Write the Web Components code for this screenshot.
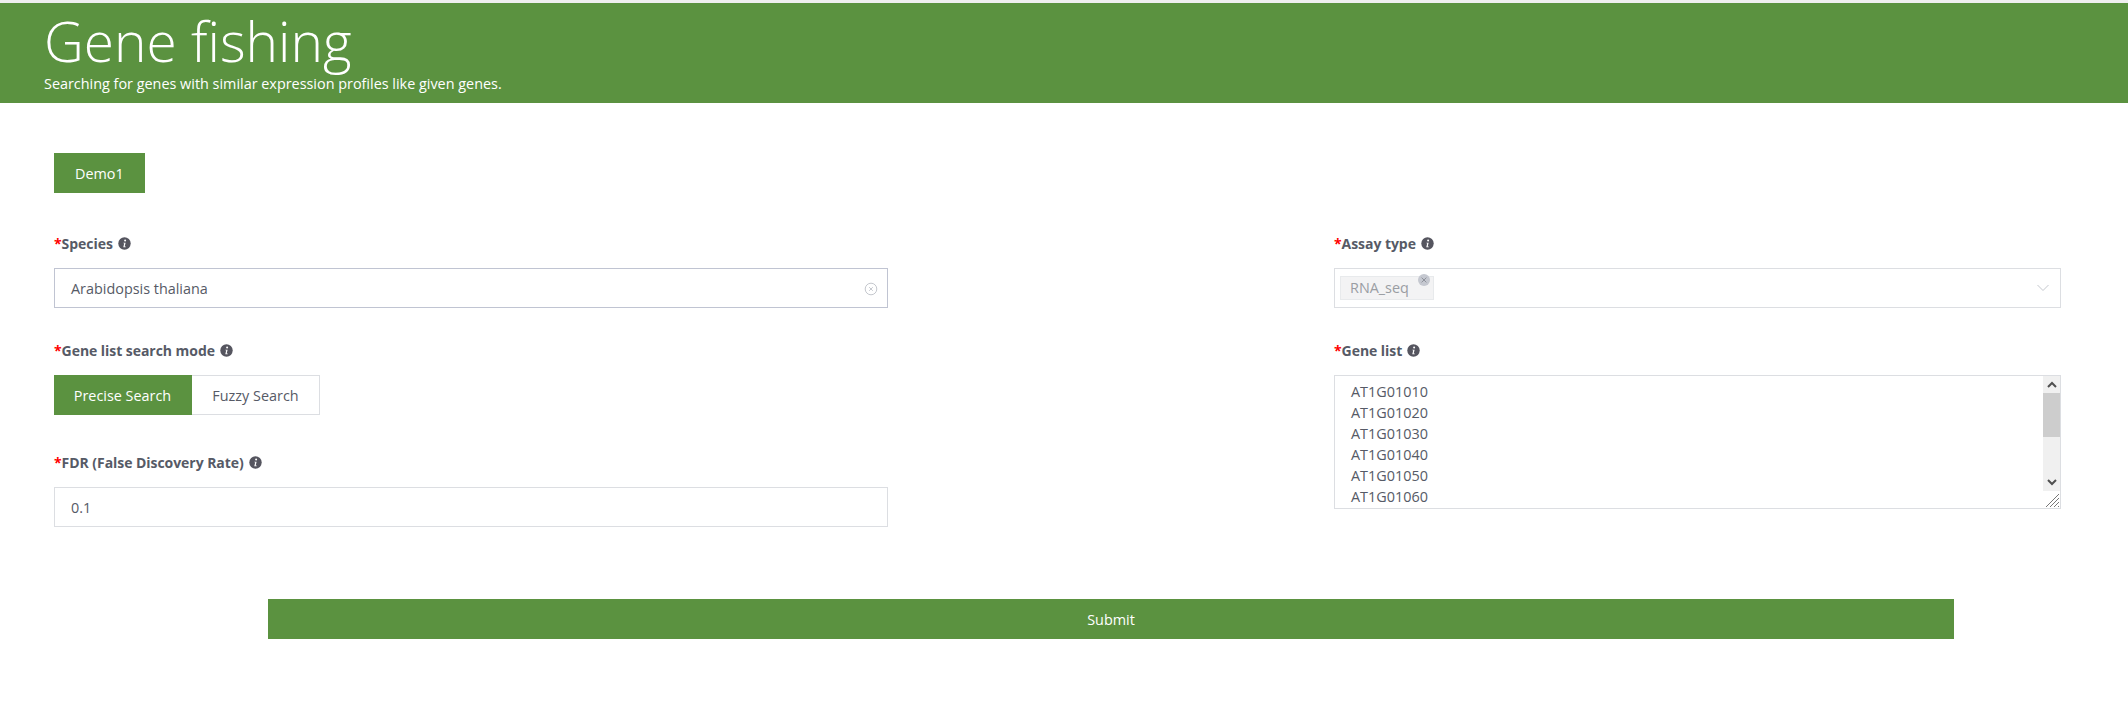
<!DOCTYPE html>
<html lang="en">
<head>
<meta charset="utf-8">
<title>Gene fishing</title>
<style>
  html, body { margin: 0; background: #fff; }
  body { font-family: "Open Sans", "Liberation Sans", sans-serif; font-size: 14.4px; color: #565a66; }
</style>
</head>
<body>
<gene-fishing-page></gene-fishing-page>

<script>
(function () {
  const GREEN = '#5b9240';
  const INFO_ICON = `
    <svg width="13" height="13" viewBox="0 0 13 13" aria-hidden="true">
      <circle cx="6.5" cy="6.5" r="6.2" fill="#55555f"/>
      <circle cx="7.1" cy="3.6" r="1" fill="#fff"/>
      <path d="M5.4 5.7h2.2L6.7 9.6h1v.6H5.3l.9-3.9h-.9z" fill="#fff"/>
    </svg>`;

  class PageBanner extends HTMLElement {
    constructor() {
      super();
      this.attachShadow({ mode: 'open' }).innerHTML = `
        <style>
          :host { display: block; border-top: 3px solid #efefef; background: ${GREEN}; color: #fff; }
          .inner { height: 100px; box-sizing: border-box; padding: 6px 0 0 44px; }
          h1 { margin: 0; font-size: 55px; line-height: 64px; font-weight: 300; }
          p { margin: 1px 0 0; font-size: 14.4px; line-height: 20px; }
        </style>
        <div class="inner">
          <h1>${this.getAttribute('heading')}</h1>
          <p>${this.getAttribute('subheading')}</p>
        </div>`;
    }
  }

  class PrimaryButton extends HTMLElement {
    constructor() {
      super();
      this.attachShadow({ mode: 'open' }).innerHTML = `
        <style>
          :host { display: flex; align-items: center; justify-content: center; height: 40px; background: ${GREEN}; color: #fff; cursor: pointer; }
          :host([compact]) { display: inline-flex; padding: 0 21px; }
        </style>
        <slot></slot>`;
    }
  }

  class FormField extends HTMLElement {
    constructor() {
      super();
      this.attachShadow({ mode: 'open' }).innerHTML = `
        <style>
          :host { display: block; margin-bottom: 31px; }
          .label { display: flex; align-items: center; gap: 5px; height: 22px; margin-bottom: 14px; font-size: 14px; font-weight: 700; letter-spacing: -0.05px; }
          .req { color: #f00; font-weight: 700; }
          svg { display: block; }
        </style>
        <div class="label"><span><span class="req">*</span>${this.getAttribute('label')}</span>${INFO_ICON}</div>
        <slot></slot>`;
    }
  }

  class TextBox extends HTMLElement {
    constructor() {
      super();
      const clearable = this.hasAttribute('clearable');
      this.attachShadow({ mode: 'open' }).innerHTML = `
        <style>
          :host { display: flex; align-items: center; justify-content: space-between; height: 40px; box-sizing: border-box; border: 1px solid #dcdee2; padding: 0 9px 0 16px; }
          :host([clearable]) { border-color: #c0c4d2; }
          svg { display: block; margin-top: 1px; }
        </style>
        <span>${this.getAttribute('value')}</span>
        ${clearable ? `<svg width="14" height="14" viewBox="0 0 14 14" fill="none" stroke="#c5c8ce">
          <circle cx="7" cy="7" r="5.8"/><path d="M5.2 5.2l3.6 3.6M8.8 5.2l-3.6 3.6"/></svg>` : ''}`;
    }
  }

  class TagSelect extends HTMLElement {
    constructor() {
      super();
      this.attachShadow({ mode: 'open' }).innerHTML = `
        <style>
          :host { display: flex; align-items: center; justify-content: space-between; height: 40px; box-sizing: border-box; border: 1px solid #dcdee2; padding: 0 10px 0 5px; }
          .tag { position: relative; box-sizing: border-box; width: 94px; height: 24px; padding-left: 9px; line-height: 22px; border: 1px solid #e8eaec; background: #f3f3f4; color: #9a9da3; }
          .close { position: absolute; top: -3px; right: 3px; }
          svg { display: block; }
        </style>
        <span class="tag">${this.getAttribute('tag')}
          <svg class="close" width="12" height="12" viewBox="0 0 12 12">
            <circle cx="6" cy="6" r="6" fill="#c5c8d0"/>
            <path d="M3.6 3.6l4.8 4.8M8.4 3.6l-4.8 4.8" stroke="#8f929b" fill="none"/>
          </svg>
        </span>
        <svg width="14" height="8" viewBox="0 0 14 8" fill="none" stroke="#c5c8ce"><path d="M1.5 1l5.5 5.5L12.5 1"/></svg>`;
    }
  }

  class ModeSwitch extends HTMLElement {
    constructor() {
      super();
      const options = this.getAttribute('options').split('|');
      const active = this.getAttribute('active');
      this.attachShadow({ mode: 'open' }).innerHTML = `
        <style>
          :host { display: flex; height: 40px; margin-bottom: 36px; }
          .opt { display: flex; align-items: center; justify-content: center; box-sizing: border-box; border: 1px solid #dcdee2; border-left: 0; width: 128px; }
          .opt.on { width: 138px; background: ${GREEN}; border-color: ${GREEN}; color: #fff; }
        </style>
        ${options.map((o) => `<div class="opt ${o === active ? 'on' : ''}">${o}</div>`).join('')}`;
    }
  }

  class GeneList extends HTMLElement {
    constructor() {
      super();
      const genes = this.getAttribute('genes').split(' ');
      this.attachShadow({ mode: 'open' }).innerHTML = `
        <style>
          :host { display: flex; height: 134px; box-sizing: border-box; border: 1px solid #dcdee2; overflow: hidden; }
          .text { flex: 1; padding: 5px 16px 0; line-height: 21px; overflow: hidden; }
          .bar { width: 17px; display: flex; flex-direction: column; flex: none; }
          .track { height: 115px; flex: none; background: #f0f0f0; display: flex; flex-direction: column; }
          .arrow { height: 17px; flex: none; display: flex; align-items: center; justify-content: center; }
          .thumb { height: 44px; flex: none; background: #cdcdcd; }
          .fill { flex: 1; }
          .grip { flex: 1; display: flex; align-items: flex-end; justify-content: flex-end; }
          svg { display: block; }
        </style>
        <div class="text">${genes.map((g) => `<div>${g}</div>`).join('')}</div>
        <div class="bar">
          <div class="track">
            <div class="arrow"><svg width="10" height="7" viewBox="0 0 10 7" fill="none" stroke="#505050" stroke-width="2"><path d="M1 6l4-4 4 4"/></svg></div>
            <div class="thumb"></div>
            <div class="fill"></div>
            <div class="arrow"><svg width="10" height="7" viewBox="0 0 10 7" fill="none" stroke="#505050" stroke-width="2"><path d="M1 1l4 4 4-4"/></svg></div>
          </div>
          <div class="grip"><svg width="15" height="15" viewBox="0 0 15 15" fill="none" stroke="#777"><path d="M1 14L14 1M5 14l9-9M9 14l5-5M13 14l1-1"/></svg></div>
        </div>`;
    }
  }

  class GeneFishingPage extends HTMLElement {
    constructor() {
      super();
      this.attachShadow({ mode: 'open' }).innerHTML = `
        <style>
          :host { display: block; }
          main { padding: 50px 67px 71px 54px; }
          .demo { margin-bottom: 39px; }
          .cols { display: grid; grid-template-columns: 834px 727px; column-gap: 446px; }
          .submit { padding: 41px 107px 0 214px; }
        </style>
        <page-banner heading="Gene fishing" subheading="Searching for genes with similar expression profiles like given genes."></page-banner>
        <main>
          <div class="demo"><primary-button compact>Demo1</primary-button></div>
          <div class="cols">
            <div>
              <form-field label="Species"><text-box value="Arabidopsis thaliana" clearable></text-box></form-field>
              <form-field label="Gene list search mode"><mode-switch options="Precise Search|Fuzzy Search" active="Precise Search"></mode-switch></form-field>
              <form-field label="FDR (False Discovery Rate)"><text-box value="0.1"></text-box></form-field>
            </div>
            <div>
              <form-field label="Assay type"><tag-select tag="RNA_seq"></tag-select></form-field>
              <form-field label="Gene list"><gene-list genes="AT1G01010 AT1G01020 AT1G01030 AT1G01040 AT1G01050 AT1G01060"></gene-list></form-field>
            </div>
          </div>
          <div class="submit"><primary-button>Submit</primary-button></div>
        </main>`;
    }
  }

  customElements.define('page-banner', PageBanner);
  customElements.define('primary-button', PrimaryButton);
  customElements.define('form-field', FormField);
  customElements.define('text-box', TextBox);
  customElements.define('tag-select', TagSelect);
  customElements.define('mode-switch', ModeSwitch);
  customElements.define('gene-list', GeneList);
  customElements.define('gene-fishing-page', GeneFishingPage);
}());
</script>
</body>
</html>
